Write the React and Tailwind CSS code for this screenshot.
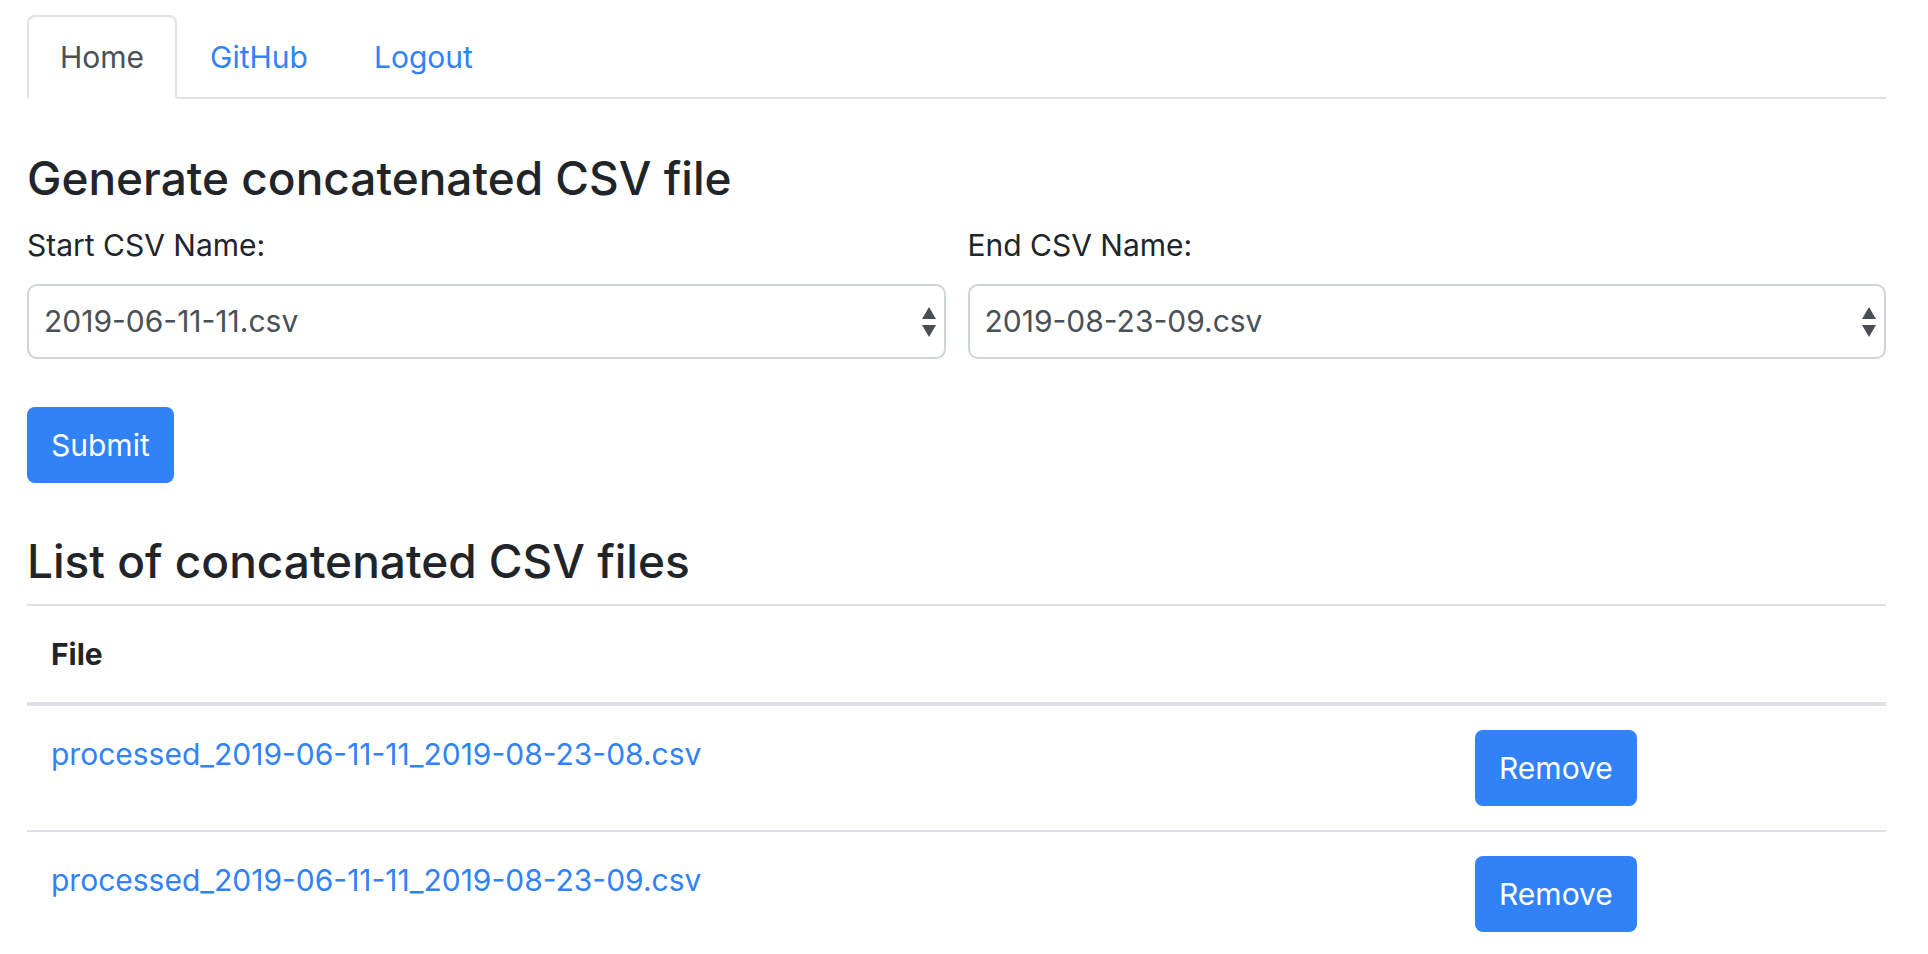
import React from "react";

function SelectArrows() {
  return (
    <svg width="16" height="32" viewBox="0 0 16 32" className="shrink-0">
      <polygon points="8,1 15,13 1,13" fill="#4a4f55" />
      <polygon points="1,19 15,19 8,31" fill="#4a4f55" />
    </svg>
  );
}

function FakeSelect({ value }) {
  return (
    <div className="h-[75px] border-2 border-[#ced4da] rounded-[10px] pl-[15px] pr-[7px] flex items-center justify-between bg-white text-[30px] text-[#495057]">
      <span>{value}</span>
      <SelectArrows />
    </div>
  );
}

const files = [
  "processed_2019-06-11-11_2019-08-23-08.csv",
  "processed_2019-06-11-11_2019-08-23-09.csv",
];

export default function App() {
  return (
    <div className="min-h-screen bg-white font-['Inter',sans-serif] text-[#212529]">
      <div className="ml-[27px] w-[1859px] pt-[15px]">
        <ul className="flex border-b-2 border-[#dee2e6]">
          <li className="-mb-[2px]">
            <a className="block px-[31px] py-[16px] border-2 border-[#dee2e6] border-b-white rounded-t-[8px] text-[#495057] text-[30px] leading-[48px] bg-white">
              Home
            </a>
          </li>
          <li className="-mb-[2px]">
            <a className="block px-[31px] py-[16px] border-2 border-transparent text-[#3182f7] text-[30px] leading-[48px]">
              GitHub
            </a>
          </li>
          <li className="-mb-[2px]">
            <a className="block px-[31px] py-[16px] border-2 border-transparent text-[#3182f7] text-[30px] leading-[48px]">
              Logout
            </a>
          </li>
        </ul>

        <h3 className="mt-[50px] mb-[14px] text-[46px] leading-[58px] font-medium">
          Generate concatenated CSV file
        </h3>

        <div className="grid grid-cols-2 gap-x-[22px]">
          <div>
            <label className="block text-[30px] leading-[48px] mb-[15px]">Start CSV Name:</label>
            <FakeSelect value="2019-06-11-11.csv" />
          </div>
          <div>
            <label className="block text-[30px] leading-[48px] mb-[15px]">End CSV Name:</label>
            <FakeSelect value="2019-08-23-09.csv" />
          </div>
        </div>

        <button className="mt-[48px] h-[76px] px-[24px] rounded-[8px] bg-[#3182f7] text-white text-[30px] leading-[48px]">
          Submit
        </button>

        <h2 className="mt-[49px] mb-[14px] text-[46px] leading-[58px] font-medium">
          List of concatenated CSV files
        </h2>

        <table className="w-full border-collapse">
          <colgroup>
            <col className="w-[1424px]" />
            <col />
          </colgroup>
          <thead>
            <tr>
              <th className="text-left font-bold text-[30px] leading-[48px] p-[24px] border-t-2 border-b-4 border-[#dee2e6]">
                File
              </th>
              <th className="p-[24px] border-t-2 border-b-4 border-[#dee2e6]"></th>
            </tr>
          </thead>
          <tbody>
            {files.map((f) => (
              <tr key={f}>
                <td className="align-top p-[24px] border-t-2 border-[#dee2e6] text-[30px] leading-[48px]">
                  <a className="text-[#3182f7]">{f}</a>
                </td>
                <td className="align-top p-[24px] border-t-2 border-[#dee2e6]">
                  <button className="h-[76px] px-[24px] rounded-[8px] bg-[#3182f7] text-white text-[30px] leading-[48px]">
                    Remove
                  </button>
                </td>
              </tr>
            ))}
          </tbody>
        </table>
      </div>
    </div>
  );
}
